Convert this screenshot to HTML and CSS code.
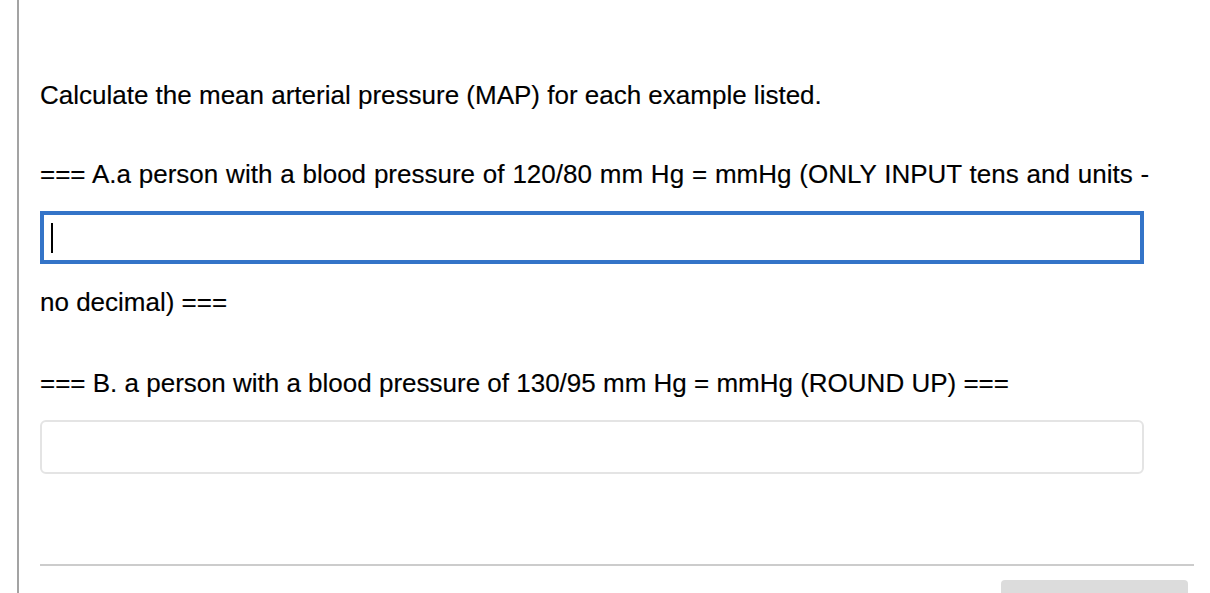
FILE: index.html
```html
<!DOCTYPE html>
<html lang="en">
<head>
<meta charset="utf-8">
<title>MAP question</title>
<link rel="stylesheet" href="styles.css">
</head>
<body>
<div class="page">
  <div class="content">
    <p class="line intro">Calculate the mean arterial pressure (MAP) for each example listed.</p>
    <p class="line qa">=== A.a person with a blood pressure of 120/80 mm Hg = mmHg (ONLY INPUT tens and units -</p>
    <div class="field-wrap">
      <input class="field field-active" type="text" aria-label="Answer A">
      <span class="caret"></span>
    </div>
    <p class="line tail">no decimal) ===</p>
    <p class="line qb">=== B. a person with a blood pressure of 130/95 mm Hg = mmHg (ROUND UP) ===</p>
    <div class="field-wrap field-wrap-b">
      <input class="field field-idle" type="text" aria-label="Answer B">
    </div>
    <div class="rule"></div>
    <div class="footer">
      <div class="btn"></div>
    </div>
  </div>
</div>
</body>
</html>
```

FILE: styles.css
```css
html, body {
  margin: 0;
  padding: 0;
  background: #ffffff;
  height: 100%;
  overflow: hidden;
}

body {
  font-family: "Liberation Sans", Arial, sans-serif;
  color: #000000;
}

.page {
  margin-left: 17px;
  border-left: 2px solid #a3a3a3;
  min-height: 593px;
  box-sizing: border-box;
  padding-left: 21px;
  padding-top: 81px;
}

.content {
  width: 1154px;
}

.line {
  margin: 0;
  font-size: 26px;
  line-height: 28px;
  white-space: nowrap;
  -webkit-text-stroke: 0.15px #000000;
}

.qa {
  margin-top: 51px;
  word-spacing: 0.6px;
}

.field-wrap {
  position: relative;
  width: 1104px;
  margin-top: 23px;
}

.field {
  display: block;
  box-sizing: border-box;
  width: 1104px;
  height: 53px;
  margin: 0;
  padding: 0 10px;
  font-family: "Liberation Sans", Arial, sans-serif;
  font-size: 22px;
  background: #ffffff;
  outline: none;
}

.field-active {
  border: 4px solid #3474c8;
  border-radius: 0;
}

.field-idle {
  height: 54px;
  border: 2px solid #e4e4e4;
  border-radius: 6px;
}

.caret {
  position: absolute;
  left: 11px;
  top: 12px;
  width: 2px;
  height: 30px;
  background: #000000;
}

.tail {
  margin-top: 24px;
}

.qb {
  margin-top: 53px;
}

.field-wrap-b {
  margin-top: 23px;
}

.rule {
  margin-top: 90px;
  height: 2px;
  background: #cccccc;
}

.footer {
  display: flex;
  justify-content: flex-end;
  padding-right: 6px;
  margin-top: 14px;
}

.btn {
  width: 187px;
  height: 20px;
  background: #dcdcdc;
  border-radius: 4px 4px 0 0;
}
```
